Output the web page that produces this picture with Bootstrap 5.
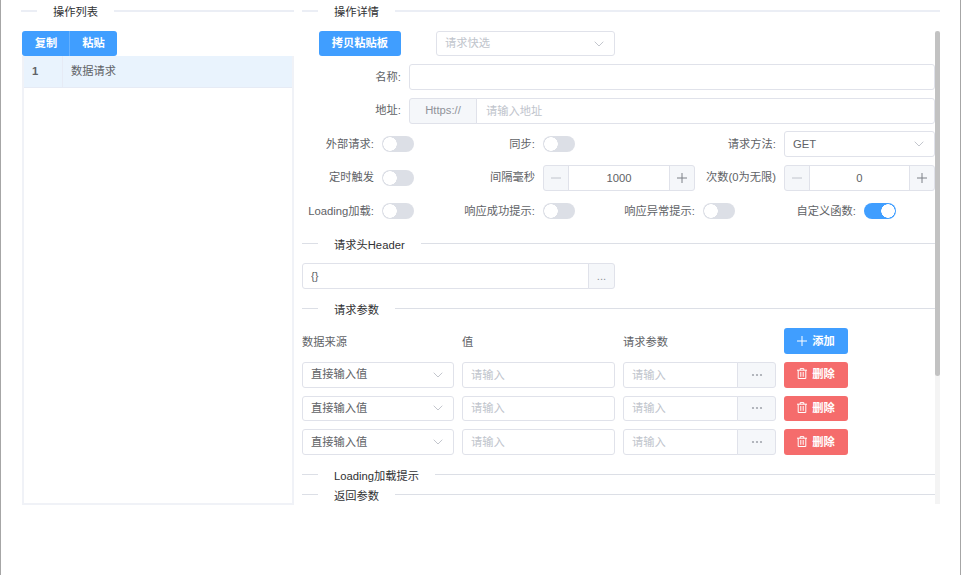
<!DOCTYPE html>
<html lang="zh-CN">
<head>
  <meta charset="UTF-8" />
  <meta name="viewport" content="width=device-width, initial-scale=1.0" />
  <title>操作详情</title>
  <link href="https://cdn.jsdelivr.net/npm/bootstrap@5.3.0/dist/css/bootstrap.min.css" rel="stylesheet" />
  <style>
    body { margin: 0; background: #fff; font-family: "Liberation Sans", "Noto Sans CJK SC", sans-serif; font-size: 11.25px; color: #606266; }
    .app-frame { height: 575px; border-left: 1px solid #a6a6a6; border-right: 1px solid #a6a6a6; padding-left: 20px; overflow: hidden; }
    .list-side { width: 273px; margin-right: 8px; flex: none; }
    .detail-side { width: 638px; flex: none; }

    /* section title with a line on both sides */
    .sec-line { height: 20px; color: #303133; }
    .sec-line::before { content: ""; width: 16px; border-top: 1px solid #dcdfe6; }
    .sec-line::after { content: ""; flex: 1; border-top: 1px solid #dcdfe6; }
    .sec-line span { padding: 0 16px; position: relative; top: 2px; }
    .sec-top { height: 21px; margin-bottom: 10px; }
    .sec-top::before, .sec-top::after { border-top: 2px solid #ebeef5; }
    .gap-after { margin-bottom: 10px; }

    .copy-btns { height: 25px; margin-left: 1px; vertical-align: top; }
    .btn-main, .btn-del { font-size: 11.25px; font-weight: 700; color: #fff; border: 0; border-radius: 3px; padding: 0; height: 25.7px; }
    .btn-main, .btn-main:hover { background: #409eff; color: #fff; }
    .btn-del, .btn-del:hover { background: #f56c6c; color: #fff; width: 64px; }
    .copy-btns .btn-main { width: 48px; height: 25px; flex: none; }
    .copy-btns .btn-main + .btn-main { margin-left: 0; border-left: 1px solid #66b1ff; }
    .btn-wide { width: 82px; height: 25px; margin-left: 17px; }
    .btn-icon { width: 64px; }

    .op-table { height: 449px; border: 2px solid #f0f2f7; border-top: 0; margin-left: 1px; }
    .op-row { height: 32px; background: #e9f3fd; border-bottom: 1px solid #e6ebf5; }
    .op-num { width: 39px; padding-left: 8px; border-right: 1px solid #e6ebf5; font-weight: 700; color: #606266; line-height: 30px; }
    .op-name { padding-left: 8px; line-height: 30px; }

    .detail-scroll { height: 473px; overflow-x: hidden; overflow-y: scroll; scrollbar-width: none; }
    .detail-body { width: 633px; padding-bottom: 144px; }

    /* the headless browser draws no scrollbar, so it lies over the pane as a shape */
    .pane-track { position: absolute; top: 31px; right: 0; width: 5px; height: 473px; background: #f4f4f4; }
    .pane-thumb { height: 345px; background: #c2c2c2; border-radius: 3px; }

    .field-line { height: 25.5px; margin-bottom: 8px; }
    .field-label { width: 107px; padding-right: 8px; text-align: right; flex: none; }
    .form-control, .form-select, .input-group-text { font-size: 11.25px; height: 25.7px; min-height: 0; border-color: #e0e2ea; border-radius: 3px; padding: 0 8px; color: #606266; box-shadow: none; }
    .form-control::placeholder { color: #c0c4cc; }
    .form-select { background-image: url("data:image/svg+xml,%3Csvg xmlns='http://www.w3.org/2000/svg' viewBox='0 0 10 6'%3E%3Cpath d='M.7.7 5 5 9.3.7' fill='none' stroke='%23b4b8c0' stroke-width='.8'/%3E%3C/svg%3E"); background-size: 10px 6px; background-position: right 10px center; }
    .select-hint { width: 179px; margin-left: 35px; height: 25px; color: #c0c4cc; }
    .input-group-text { background: #f5f7fa; color: #909399; justify-content: center; }
    .addr-prefix { width: 68px; color: #909399; }
    .addr-input { padding-left: 9px; }
    .more-btn { width: 27px; padding: 0; line-height: 20px; }
    .more-wide { width: 39px; padding: 0; }

    /* 8 tracks: label | control pairs of the switch rows */
    .switch-grid { display: grid; grid-template-columns: 80px 80px 81px 80px 80px 81px 80px 71px; row-gap: 8px; grid-auto-rows: 25.5px; align-items: center; margin-bottom: 9px; }
    .switch-grid label { text-align: right; padding-right: 8px; white-space: nowrap; }
    .span-two { grid-column: span 2; }
    .skip-two { grid-column: 6; }
    .num-group { flex-wrap: nowrap; }
    .span-num { padding-right: 8px; }
    .num-group .input-group-text { width: 26px; padding: 0; }
    .num-group .form-control { text-align: center; padding: 0; min-width: 0; }
    .form-switch { padding: 0; margin: 0; min-height: 0; display: flex; }
    .form-switch .form-check-input { width: 32px; height: 16px; margin: 0; border: 0; border-radius: 8px; background-color: #dcdfe6; background-image: radial-gradient(circle at 8px 8px, #fff 6.5px, transparent 7px); background-position: 0 0; background-size: 100% 100%; box-shadow: none; }
    .form-switch .form-check-input:checked { background-color: #409eff; background-image: radial-gradient(circle at 24px 8px, #fff 6.5px, transparent 7px); background-position: 0 0; }

    .param-grid { display: grid; grid-template-columns: 152px 153px 153px 151px; column-gap: 8px; row-gap: 8px; grid-auto-rows: 25.7px; align-items: center; margin-bottom: 9.2px; }
    .param-head { padding-top: 3px; }
    .header-group { width: 313px; margin-bottom: 9.5px; }
    .btn-main svg, .btn-del svg { margin-right: 5px; vertical-align: -1px; }
  </style>
</head>
<body>
  <div class="app-frame d-flex">
    <div class="list-side">
      <div class="sec-line sec-top d-flex align-items-center"><span>操作列表</span></div>
      <div class="btn-group copy-btns d-flex justify-content-start">
        <button class="btn btn-main">复制</button>
        <button class="btn btn-main">粘贴</button>
      </div>
      <div class="op-table">
        <div class="op-row d-flex">
          <div class="op-num">1</div>
          <div class="op-name">数据请求</div>
        </div>
      </div>
    </div>

    <div class="detail-side position-relative">
      <div class="sec-line sec-top d-flex align-items-center"><span>操作详情</span></div>
      <div class="detail-scroll">
        <div class="detail-body">
          <div class="d-flex field-line">
            <button class="btn btn-main btn-wide">拷贝粘贴板</button>
            <select class="form-select select-hint"><option>请求快选</option></select>
          </div>
          <div class="d-flex align-items-center field-line">
            <label class="field-label">名称:</label>
            <input type="text" class="form-control" />
          </div>
          <div class="d-flex align-items-center field-line">
            <label class="field-label">地址:</label>
            <div class="input-group flex-nowrap">
              <span class="input-group-text addr-prefix">Https://</span>
              <input type="text" class="form-control addr-input" placeholder="请输入地址" />
            </div>
          </div>

          <div class="switch-grid">
            <label>外部请求:</label>
            <div class="form-check form-switch"><input class="form-check-input" type="checkbox" role="switch" /></div>
            <label>同步:</label>
            <div class="form-check form-switch"><input class="form-check-input" type="checkbox" role="switch" /></div>
            <label class="skip-two">请求方法:</label>
            <select class="form-select span-two"><option>GET</option></select>

            <label>定时触发</label>
            <div class="form-check form-switch"><input class="form-check-input" type="checkbox" role="switch" /></div>
            <label>间隔毫秒</label>
            <div class="span-two span-num">
              <div class="input-group num-group">
                <span class="input-group-text"><svg width="10" height="10" viewBox="0 0 10 10"><path d="M0 5h10" stroke="#c0c4cc" stroke-width="1"/></svg></span>
                <input type="text" class="form-control" value="1000" />
                <span class="input-group-text"><svg width="10" height="10" viewBox="0 0 10 10"><path d="M0 5h10M5 0v10" stroke="#7d8087" stroke-width="1"/></svg></span>
              </div>
            </div>
            <label>次数(0为无限)</label>
            <div class="span-two">
              <div class="input-group num-group">
                <span class="input-group-text"><svg width="10" height="10" viewBox="0 0 10 10"><path d="M0 5h10" stroke="#c0c4cc" stroke-width="1"/></svg></span>
                <input type="text" class="form-control" value="0" />
                <span class="input-group-text"><svg width="10" height="10" viewBox="0 0 10 10"><path d="M0 5h10M5 0v10" stroke="#7d8087" stroke-width="1"/></svg></span>
              </div>
            </div>

            <label>Loading加载:</label>
            <div class="form-check form-switch"><input class="form-check-input" type="checkbox" role="switch" /></div>
            <label>响应成功提示:</label>
            <div class="form-check form-switch"><input class="form-check-input" type="checkbox" role="switch" /></div>
            <label>响应异常提示:</label>
            <div class="form-check form-switch"><input class="form-check-input" type="checkbox" role="switch" /></div>
            <label>自定义函数:</label>
            <div class="form-check form-switch"><input class="form-check-input" type="checkbox" role="switch" checked /></div>
          </div>

          <div class="sec-line gap-after d-flex align-items-center"><span>请求头Header</span></div>
          <div class="input-group header-group flex-nowrap">
            <input type="text" class="form-control" value="{}" />
            <span class="input-group-text more-btn">...</span>
          </div>

          <div class="sec-line gap-after d-flex align-items-center"><span>请求参数</span></div>
          <div class="param-grid">
            <div class="param-head">数据来源</div>
            <div class="param-head">值</div>
            <div class="param-head">请求参数</div>
            <button class="btn btn-main btn-icon"><svg width="10" height="10" viewBox="0 0 10 10"><path d="M0 5h10M5 0v10" stroke="#fff" stroke-width="1"/></svg>添加</button>

            <select class="form-select"><option>直接输入值</option></select>
            <input type="text" class="form-control" placeholder="请输入" />
            <div class="input-group flex-nowrap">
              <input type="text" class="form-control" placeholder="请输入" />
              <span class="input-group-text more-wide"><svg width="12" height="4" viewBox="0 0 12 4"><g fill="#a3a6ae"><circle cx="2" cy="2" r="1.1"/><circle cx="6" cy="2" r="1.1"/><circle cx="10" cy="2" r="1.1"/></g></svg></span>
            </div>
            <button class="btn btn-del"><svg width="10" height="11" viewBox="0 0 10 11"><path d="M0 2.2h10M3.2 2.2V.6h3.6v1.6M1.2 2.2v8.3h7.6V2.2M3.8 4v4.8M6.2 4v4.8" fill="none" stroke="#fff" stroke-width="1"/></svg>删除</button>

            <select class="form-select"><option>直接输入值</option></select>
            <input type="text" class="form-control" placeholder="请输入" />
            <div class="input-group flex-nowrap">
              <input type="text" class="form-control" placeholder="请输入" />
              <span class="input-group-text more-wide"><svg width="12" height="4" viewBox="0 0 12 4"><g fill="#a3a6ae"><circle cx="2" cy="2" r="1.1"/><circle cx="6" cy="2" r="1.1"/><circle cx="10" cy="2" r="1.1"/></g></svg></span>
            </div>
            <button class="btn btn-del"><svg width="10" height="11" viewBox="0 0 10 11"><path d="M0 2.2h10M3.2 2.2V.6h3.6v1.6M1.2 2.2v8.3h7.6V2.2M3.8 4v4.8M6.2 4v4.8" fill="none" stroke="#fff" stroke-width="1"/></svg>删除</button>

            <select class="form-select"><option>直接输入值</option></select>
            <input type="text" class="form-control" placeholder="请输入" />
            <div class="input-group flex-nowrap">
              <input type="text" class="form-control" placeholder="请输入" />
              <span class="input-group-text more-wide"><svg width="12" height="4" viewBox="0 0 12 4"><g fill="#a3a6ae"><circle cx="2" cy="2" r="1.1"/><circle cx="6" cy="2" r="1.1"/><circle cx="10" cy="2" r="1.1"/></g></svg></span>
            </div>
            <button class="btn btn-del"><svg width="10" height="11" viewBox="0 0 10 11"><path d="M0 2.2h10M3.2 2.2V.6h3.6v1.6M1.2 2.2v8.3h7.6V2.2M3.8 4v4.8M6.2 4v4.8" fill="none" stroke="#fff" stroke-width="1"/></svg>删除</button>
          </div>

          <div class="sec-line d-flex align-items-center"><span>Loading加载提示</span></div>
          <div class="sec-line d-flex align-items-center"><span>返回参数</span></div>
        </div>
      </div>
      <div class="pane-track"><div class="pane-thumb"></div></div>
    </div>
  </div>

  <script src="https://cdn.jsdelivr.net/npm/bootstrap@5.3.0/dist/js/bootstrap.bundle.min.js"></script>
</body>
</html>
